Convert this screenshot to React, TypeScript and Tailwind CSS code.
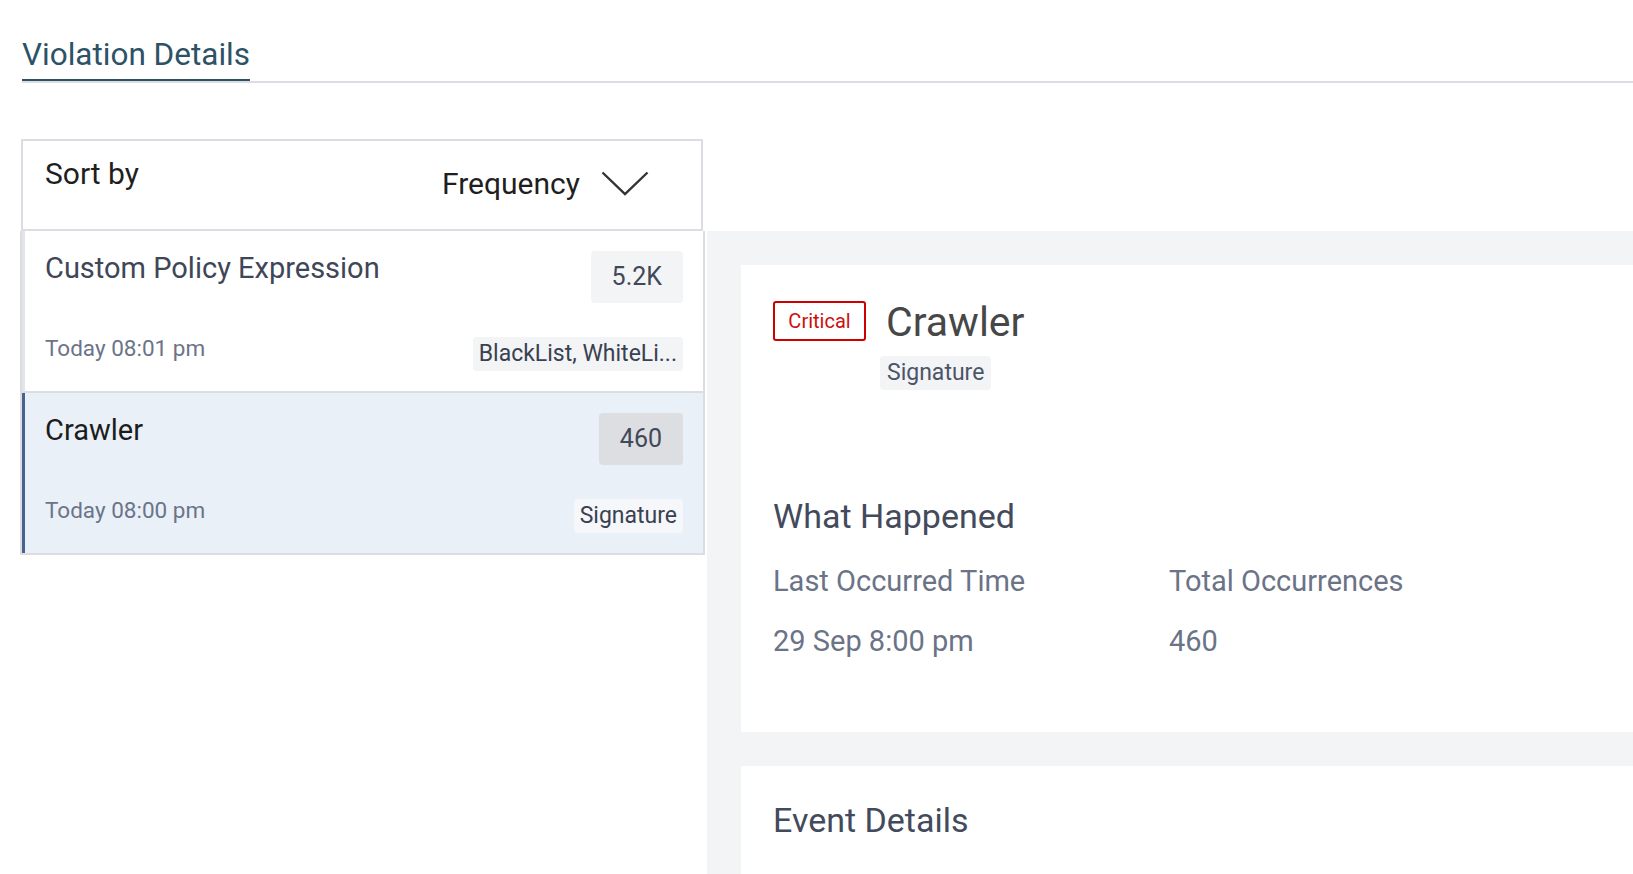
import React from "react";

type Violation = {
  name: string;
  count: string;
  time: string;
  tag: string;
  selected?: boolean;
};

const violations: Violation[] = [
  { name: "Custom Policy Expression", count: "5.2K", time: "Today 08:01 pm", tag: "BlackList, WhiteLi..." },
  { name: "Crawler", count: "460", time: "Today 08:00 pm", tag: "Signature", selected: true },
];

function Chevron() {
  return (
    <svg viewBox="0 0 48 25" className="h-[25px] w-[48px]" fill="none">
      <polyline points="1.5,1.5 24,23 46.5,1.5" stroke="#333333" strokeWidth="2.4" strokeLinejoin="miter" />
    </svg>
  );
}

function ViolationRow({ v }: { v: Violation }) {
  return (
    <div
      className={
        v.selected
          ? "border-b-2 border-l-[3px] border-b-[#dcdde2] border-l-[#46648f] bg-[#e9f0f8] pb-[20px] pl-[20px] pr-[20px] pt-[20px] last:border-b-0"
          : "border-b-2 border-l-[3px] border-b-[#dcdde2] border-l-[#e4e5e9] bg-white pb-[20px] pl-[20px] pr-[20px] pt-[20px] last:border-b-0"
      }
    >
      <div className="flex items-start justify-between">
        <div className={v.selected ? "text-[29px] leading-[35px] text-[#1c1c1c]" : "text-[29px] leading-[35px] text-[#3f4657]"}>
          {v.name}
        </div>
        <div
          className={
            v.selected
              ? "flex h-[52px] items-center rounded-[4px] bg-[#dcdee2] px-[21px] text-[25px] text-[#414859]"
              : "flex h-[52px] items-center rounded-[4px] bg-[#f3f4f6] px-[21px] text-[25px] text-[#414859]"
          }
        >
          {v.count}
        </div>
      </div>
      <div className="mt-[32px] flex items-start justify-between">
        <div className="text-[22.5px] leading-[26px] text-[#6b7488]">{v.time}</div>
        <div
          className={
            v.selected
              ? "mt-[2px] h-[34px] rounded-[4px] bg-[#f5f7fa] px-[6px] text-[23px] leading-[34px] text-[#3a4150]"
              : "mt-[2px] h-[34px] rounded-[4px] bg-[#f3f4f6] px-[6px] text-[23px] leading-[34px] text-[#3a4150]"
          }
        >
          {v.tag}
        </div>
      </div>
    </div>
  );
}

export default function App() {
  return (
    <div className="h-screen w-full overflow-hidden bg-white pl-[22px] font-['Roboto',sans-serif]">
      <div className="border-b-2 border-[#dcdde2] pt-[36px]">
        <div className="inline-block border-b-2 border-[#2d5266] pb-[5px] text-[31.5px] leading-[38px] text-[#2d5266]">
          Violation Details
        </div>
      </div>

      <div className="mt-[56px] flex">
        <div className="-ml-[2px] w-[685px] shrink-0">
          <div className="ml-[1px] mr-[2px] flex h-[92px] items-start justify-between border-2 border-[#dcdde2] pl-[22px] pr-[52px] pt-[15px] text-[30px] leading-[35px] text-[#1f1f1f]">
            <div>Sort by</div>
            <div className="mt-[10px] flex items-center gap-[21px]">
              <span>Frequency</span>
              <Chevron />
            </div>
          </div>
          <div className="border-2 border-t-0 border-[#dcdde2]">
            {violations.map((v) => (
              <ViolationRow key={v.name} v={v} />
            ))}
          </div>
        </div>

        <div className="ml-[2px] mt-[92px] h-[700px] flex-1 bg-[#f3f4f6] pl-[34px] pt-[34px]">
          <div className="bg-white pb-[74px] pl-[32px] pt-[33px]">
            <div className="flex items-start">
              <div className="mt-[3px] flex h-[40px] w-[93px] items-center justify-center rounded-[3px] border-2 border-[#cc0000] text-[20px] text-[#cc1010]">
                Critical
              </div>
              <div className="ml-[14px] flex flex-col items-start">
                <div className="pl-[6px] text-[41px] leading-[48px] text-[#474747]">Crawler</div>
                <div className="mt-[10px] h-[34px] rounded-[4px] bg-[#f3f4f6] px-[7px] text-[23px] leading-[34px] text-[#4c5468]">
                  Signature
                </div>
              </div>
            </div>

            <div className="mt-[106px] text-[34px] leading-[40px] text-[#434a5c]">What Happened</div>
            <div className="mt-[28px] grid grid-cols-[396px_1fr] gap-y-[26px] text-[29px] leading-[34px] text-[#6b7387]">
              <div>Last Occurred Time</div>
              <div>Total Occurrences</div>
              <div>29 Sep 8:00 pm</div>
              <div>460</div>
            </div>
          </div>

          <div className="mt-[34px] h-[200px] bg-white pl-[32px] pt-[34px]">
            <div className="text-[34px] leading-[40px] text-[#434a5c]">Event Details</div>
          </div>
        </div>
      </div>
    </div>
  );
}
